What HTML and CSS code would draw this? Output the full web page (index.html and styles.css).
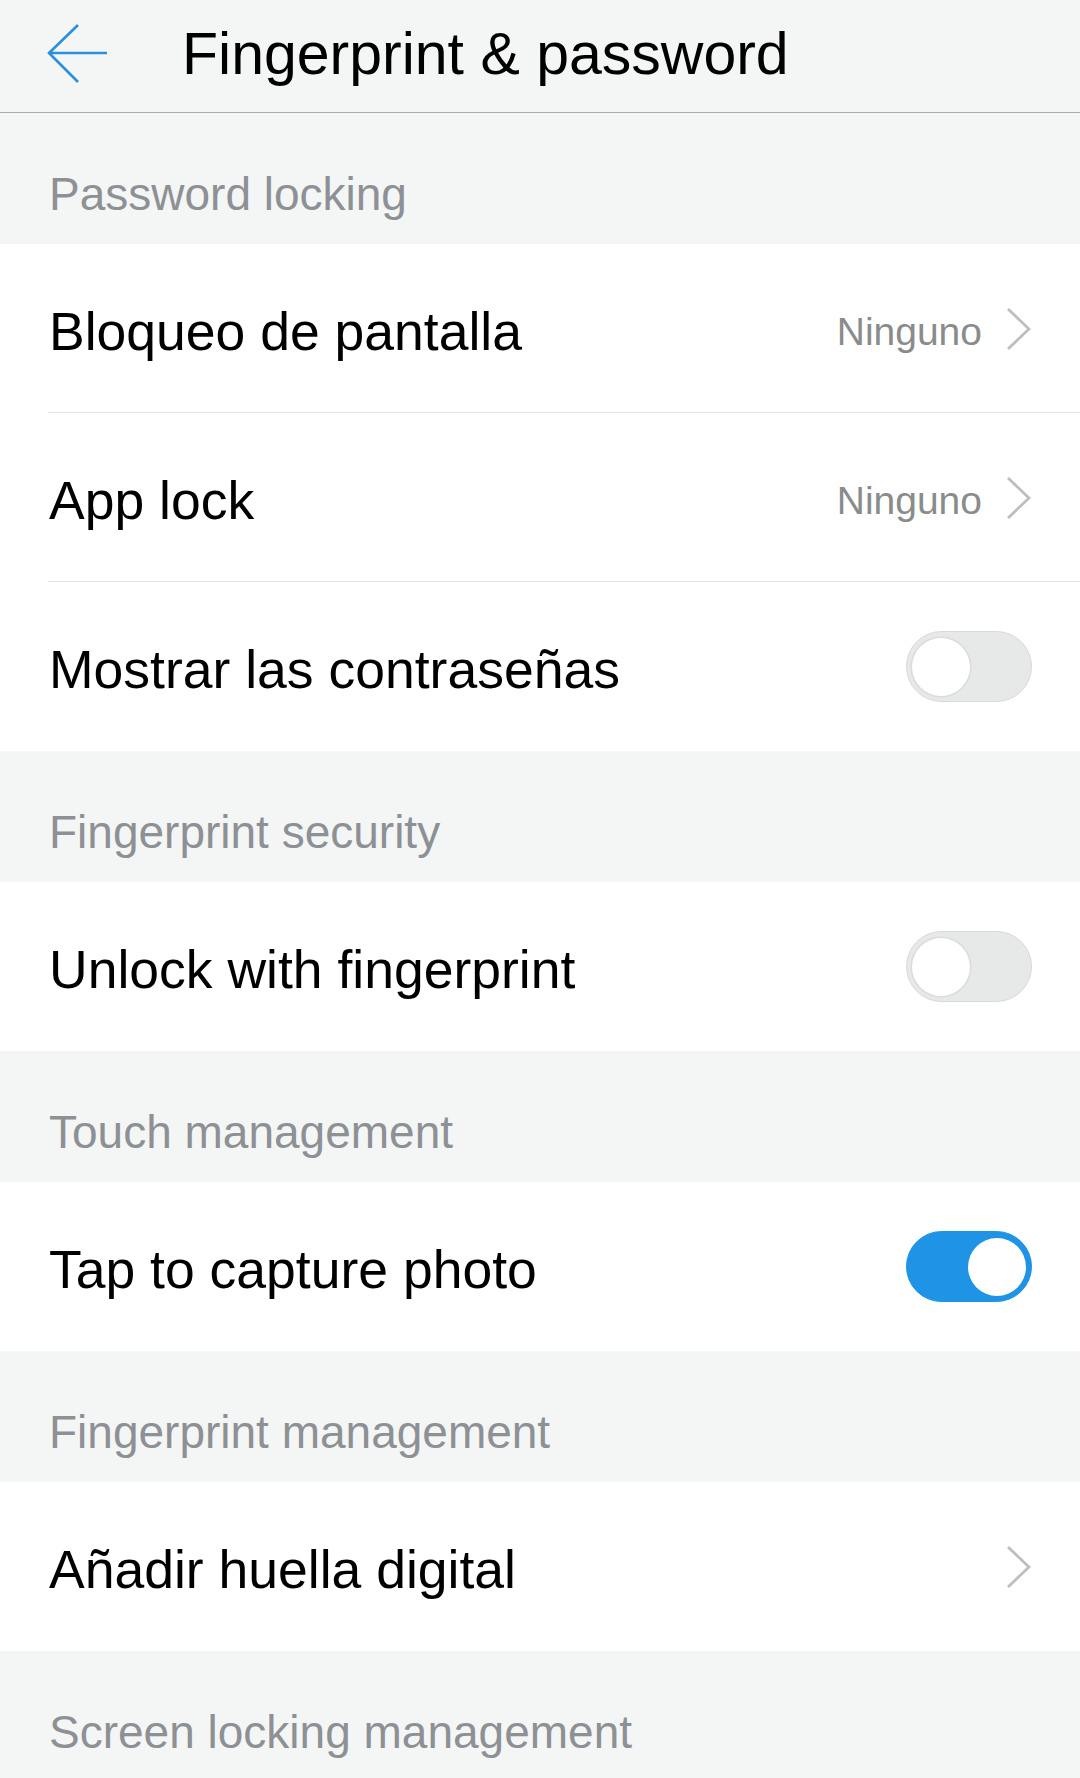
FILE: index.html
```html
<!DOCTYPE html>
<html lang="es">
<head>
 <meta charset="UTF-8">
 <meta name="viewport" content="width=device-width,initial-scale=1.0">
 <title>Fingerprint &amp; password</title>
 <link rel="stylesheet" href="styles.css">
</head>
<body>
<div class="topbar">
  <svg class="back" width="64" height="64" viewBox="0 0 64 64">
    <path d="M32 4 L3 32 L32 61 M3 32 L61 32" fill="none" stroke="#2a8fdd" stroke-width="2.6"/>
  </svg>
  <h1>Fingerprint &amp; password</h1>
</div>

<div class="section">Password locking</div>
<div class="row divided">
  <span class="label">Bloqueo de pantalla</span>
  <span class="value">Ninguno</span>
  <svg class="chev" width="26" height="44" viewBox="0 0 26 44"><path d="M2 2 L23 22 L2 42" fill="none" stroke="#bdbebe" stroke-width="2.8"/></svg>
</div>
<div class="row divided">
  <span class="label">App lock</span>
  <span class="value">Ninguno</span>
  <svg class="chev" width="26" height="44" viewBox="0 0 26 44"><path d="M2 2 L23 22 L2 42" fill="none" stroke="#bdbebe" stroke-width="2.8"/></svg>
</div>
<div class="row">
  <span class="label">Mostrar las contraseñas</span>
  <span class="switch"><span class="knob"></span></span>
</div>

<div class="section">Fingerprint security</div>
<div class="row">
  <span class="label">Unlock with fingerprint</span>
  <span class="switch"><span class="knob"></span></span>
</div>

<div class="section">Touch management</div>
<div class="row">
  <span class="label">Tap to capture photo</span>
  <span class="switch on"><span class="knob"></span></span>
</div>

<div class="section">Fingerprint management</div>
<div class="row">
  <span class="label">Añadir huella digital</span>
  <svg class="chev" width="26" height="44" viewBox="0 0 26 44"><path d="M2 2 L23 22 L2 42" fill="none" stroke="#bdbebe" stroke-width="2.8"/></svg>
</div>

<div class="section">Screen locking management</div>
</body>
</html>
```

FILE: styles.css
```css
body{
  margin: 0;
  background: #f4f6f5;
  font-family: "Liberation Sans", Arial, sans-serif;
  color: #000;
}
.topbar{
  height: 112px;
  display: flex;
  align-items: center;
  border-bottom: 1px solid #a9abaa;
  background: #f4f6f5;
}
.back{
  margin-left: 46px;
  margin-top: -6px;
}
.topbar h1{
  margin: 0 0 0 72px;
  font-size: 59px;
  font-weight: normal;
  line-height: 1;
  margin-top: -4px;
}
.section{
  height: 131px;
  box-sizing: border-box;
  display: flex;
  align-items: flex-end;
  padding: 0 48px 27px 49px;
  font-size: 46px;
  line-height: 46px;
  color: #8d9094;
  background: #f4f6f5;
}
.row{
  height: 169px;
  box-sizing: border-box;
  display: flex;
  align-items: center;
  padding: 0 48px 0 49px;
  background: #fff;
  position: relative;
}
/* inset divider under a row */
.row.divided::after{
  content: "";
  position: absolute;
  left: 48px;
  right: 0;
  bottom: 0;
  height: 1px;
  background: #e2e4e3;
}
.label{
  flex: 1;
  font-size: 53.5px;
  line-height: 1;
  padding-top: 6px;
}
.value{
  font-size: 39px;
  line-height: 1;
  padding-top: 6px;
  color: #8a8b8b;
  margin-right: 24px;
}
.chev{
  display: block;
}
.switch{
  width: 126px;
  height: 71px;
  box-sizing: border-box;
  border-radius: 36px;
  background: #e6e9e8;
  border: 1px solid #d7dad9;
  display: flex;
  align-items: center;
  padding: 0 5px;
}
.knob{
  width: 58px;
  height: 58px;
  border-radius: 50%;
  background: #fff;
  box-shadow: 0 0 0 1.5px #d9dcdb;
}
.switch.on{
  background: #1f93e6;
  border-color: #1f93e6;
  justify-content: flex-end;
}
.switch.on .knob{
  box-shadow: none;
}
```
